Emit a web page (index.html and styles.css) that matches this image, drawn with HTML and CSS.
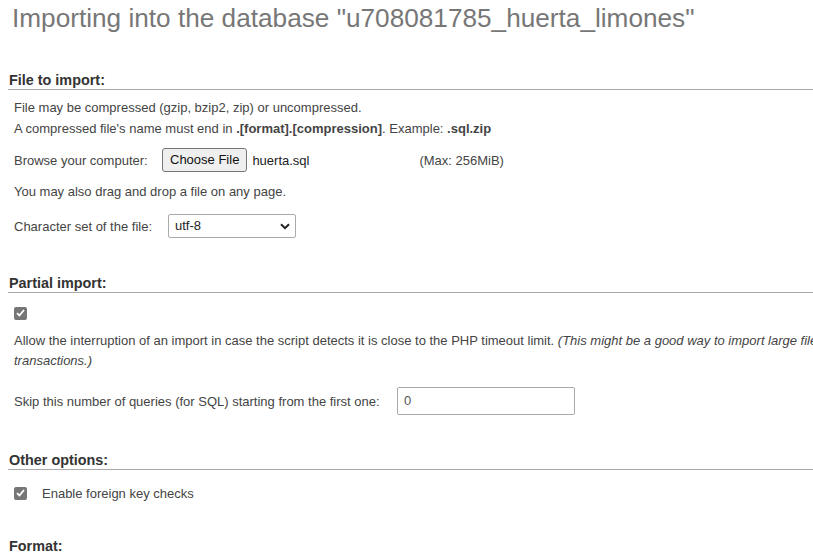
FILE: index.html
```html
<!DOCTYPE html>
<html>
<head>
<meta charset="utf-8">
<link rel="stylesheet" href="styles.css">
</head>
<body>
<h2 class="title">Importing into the database "u708081785_huerta_limones"</h2>

<section class="sec sec-file">
  <div class="sec-head">File to import:</div>
  <div class="body">
    <div class="line l1">File may be compressed (gzip, bzip2, zip) or uncompressed.</div>
    <div class="line l2">A compressed file's name must end in <b>.[format].[compression]</b>. Example: <b>.sql.zip</b></div>
    <div class="row browse">
      <span class="lbl">Browse your computer:</span>
      <span class="btn">Choose File</span>
      <span class="fname">huerta.sql</span>
      <span class="max">(Max: 256MiB)</span>
    </div>
    <div class="line drag">You may also drag and drop a file on any page.</div>
    <div class="row charset">
      <span class="lbl">Character set of the file:</span>
      <span class="select">utf-8
        <svg class="chev" width="10" height="7" viewBox="0 0 10 7"><path d="M1 1.2 L5 5.2 L9 1.2" fill="none" stroke="#222" stroke-width="2"/></svg>
      </span>
    </div>
  </div>
</section>

<section class="sec sec-partial">
  <div class="sec-head">Partial import:</div>
  <div class="body">
    <div class="cbrow first"><span class="cb"><svg width="9" height="8" viewBox="0 0 9 8"><path d="M1 4.2 L3.4 6.5 L8 1" fill="none" stroke="#fff" stroke-width="1.8"/></svg></span></div>
    <div class="para">Allow the interruption of an import in case the script detects it is close to the PHP timeout limit. <i>(This might be a good way to import large files, however it can break transactions.)</i></div>
    <div class="row skip">
      <span class="lbl">Skip this number of queries (for SQL) starting from the first one:</span>
      <span class="input">0</span>
    </div>
  </div>
</section>

<section class="sec sec-other">
  <div class="sec-head">Other options:</div>
  <div class="body">
    <div class="cbrow fk"><span class="cb"><svg width="9" height="8" viewBox="0 0 9 8"><path d="M1 4.2 L3.4 6.5 L8 1" fill="none" stroke="#fff" stroke-width="1.8"/></svg></span><span class="cblabel">Enable foreign key checks</span></div>
  </div>
</section>

<section class="sec sec-format">
  <div class="sec-head">Format:</div>
</section>
</body>
</html>
```
FILE: styles.css
```css
html, body {
  margin: 0;
  padding: 0;
  background: #fff;
  overflow: hidden;
}
body {
  width: 813px;
  height: 555px;
  font-family: "Liberation Sans", Arial, sans-serif;
  font-size: 13px;
  color: #444;
}
.title {
  margin: 0;
  padding: 0 0 0 12px;
  height: 40px;
  line-height: 36px;
  font-size: 26.2px;
  font-weight: normal;
  color: #777;
  white-space: nowrap;
}
.sec {
  margin-left: 8px;
  overflow: hidden;
}
.sec-head {
  font-weight: bold;
  font-size: 14.4px;
  color: #333;
  padding-left: 1px;
  height: 18px;
  line-height: 18px;
  border-bottom: 1px solid #aaa;
}
.sec-file { margin-top: 31px; }
.body {
  padding-left: 6px;
}
.line {
  height: 21px;
  line-height: 21px;
}
.l1 { margin-top: 7px; }
.row {
  display: flex;
  align-items: center;
}
.row > * { flex-shrink: 0; }
.browse {
  margin-top: 9px;
  height: 24px;
}
.browse .lbl { width: 148px; }
.btn {
  box-sizing: border-box;
  height: 24px;
  line-height: 22px;
  padding: 0 7px;
  border: 1px solid #767676;
  border-radius: 3px;
  background: #efefef;
  color: #111;
  font-size: 13px;
}
.fname { margin-left: 5px; color: #222; width: 167px; }
.max { color: #444; }
.drag { margin-top: 9px; }
.charset {
  margin-top: 12px;
  height: 24px;
}
.charset .lbl { width: 154px; }
.select {
  box-sizing: border-box;
  width: 128px;
  height: 24px;
  line-height: 22px;
  border: 1px solid #aaa;
  border-radius: 2px;
  padding-left: 6px;
  color: #222;
  position: relative;
}
.chev {
  position: absolute;
  right: 5px;
  top: 8px;
}
.sec-partial { margin-top: 36px; }
.cb {
  display: inline-flex;
  align-items: center;
  justify-content: center;
  box-sizing: border-box;
  width: 13px;
  height: 13px;
  border-radius: 2px;
  background: #767676;
  flex-shrink: 0;
}
.cbrow {
  display: flex;
  align-items: center;
  height: 16px;
}
.first { margin-top: 12px; }
.para {
  margin-top: 10px;
  line-height: 20px;
  white-space: normal;
  width: 985px;
}
.skip {
  margin-top: 16px;
  height: 28px;
}
.skip .lbl { width: 383px; }
.input {
  box-sizing: border-box;
  width: 178px;
  height: 28px;
  line-height: 26px;
  border: 1px solid #aaa;
  border-radius: 2px;
  padding-left: 6px;
  color: #555;
}
.sec-other { margin-top: 36px; }
.fk { margin-top: 15px; }
.cblabel { margin-left: 15px; }
.sec-format { margin-top: 36px; }
.sec-format .sec-head { border-bottom: none; }
```
